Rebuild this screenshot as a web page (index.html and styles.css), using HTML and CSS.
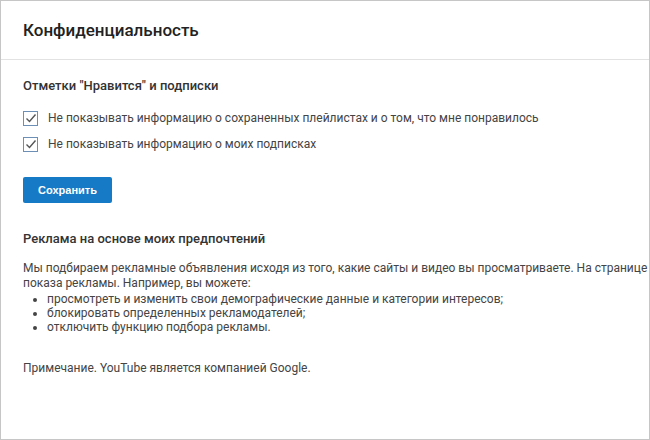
FILE: index.html
```html
<!DOCTYPE html>
<html lang="ru">
    <head>
        <meta charset="UTF-8">
        <meta name="viewport" content="width=device-width, initial-scale=1.0">
        <title>Конфиденциальность</title>
        <link rel="stylesheet" href="styles.css">
    </head>
    <body>
        <div class="frame">
            <div class="header">
                <h1 class="title">Конфиденциальность</h1>
            </div>
            <div class="content">
                <h2 class="section-title">Отметки "Нравится" и подписки</h2>
                <div class="options">
                    <label class="option">
                        <span class="box">
                            <svg width="12" height="12" viewBox="0 0 12 12"><polyline points="1.5,6.5 4.5,9.5 10.5,2.5" fill="none" stroke="#555" stroke-width="1.4"/></svg>
                        </span>
                        Не показывать информацию о сохраненных плейлистах и о том, что мне понравилось
                    </label>
                    <label class="option">
                        <span class="box">
                            <svg width="12" height="12" viewBox="0 0 12 12"><polyline points="1.5,6.5 4.5,9.5 10.5,2.5" fill="none" stroke="#555" stroke-width="1.4"/></svg>
                        </span>
                        Не показывать информацию о моих подписках
                    </label>
                </div>
                <button class="button">Сохранить</button>

                <h2 class="section-title ads-title">Реклама на основе моих предпочтений</h2>
                <p class="text">
                    Мы подбираем рекламные объявления исходя из того, какие сайты и видео вы просматриваете. На странице<br/>
                    показа рекламы. Например, вы можете:
                </p>
                <ul class="list">
                    <li>просмотреть и изменить свои демографические данные и категории интересов;</li>
                    <li>блокировать определенных рекламодателей;</li>
                    <li>отключить функцию подбора рекламы.</li>
                </ul>
                <p class="note">Примечание. YouTube является компанией Google.</p>
            </div>
        </div>
    </body>
</html>
```

FILE: styles.css
```css
body {
    margin: 0;
    font-family: Roboto, "Liberation Sans", sans-serif;
    color: #333;
    background: #fff;
}
.frame {
    width: 650px;
    height: 440px;
    box-sizing: border-box;
    border: 1px solid #c6c6c6;
    overflow: hidden;
}
.header {
    height: 58px;
    border-bottom: 1px solid #e2e2e2;
    padding-left: 22px;
    display: flex;
    align-items: center;
}
.title {
    margin: 0;
    font-size: 17px;
    font-weight: 500;
    color: #222;
}
.content {
    padding: 0 22px;
    white-space: nowrap;
}
.section-title {
    margin: 18px 0 0;
    font-size: 13px;
    line-height: 16px;
    font-weight: 500;
    color: #333;
}
.options {
    margin-top: 14px;
}
.option {
    display: flex;
    align-items: center;
    height: 20px;
    margin-bottom: 6px;
    font-size: 12px;
    color: #444;
}
.box {
    width: 13px;
    height: 13px;
    border: 1px solid #6d8fb5;
    margin-right: 10px;
    display: flex;
    align-items: center;
    justify-content: center;
    background: #fff;
}
.button {
    margin-top: 23px;
    width: 89px;
    height: 26px;
    border: none;
    border-radius: 2px;
    background-color: #167ac6;
    color: #fff;
    font-family: "Liberation Sans", Arial, sans-serif;
    font-size: 11px;
    font-weight: bold;
    cursor: pointer;
    display: block;
}
.ads-title {
    margin-top: 28px;
}
.text {
    margin: 14px 0 0;
    font-size: 12px;
    line-height: 15px;
    color: #444;
}
.list {
    margin: 1px 0 0;
    padding-left: 24px;
    font-size: 12px;
    line-height: 14px;
    color: #444;
}
.note {
    margin: 26px 0 0;
    font-size: 12px;
    line-height: 16px;
    color: #444;
}
```
